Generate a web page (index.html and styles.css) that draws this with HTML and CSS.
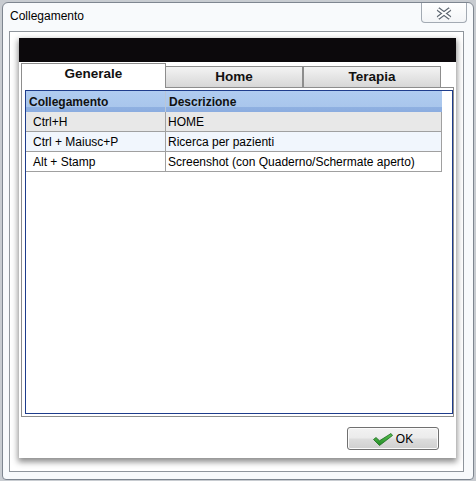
FILE: index.html
```html
<!DOCTYPE html>
<html lang="it">
<head>
    <meta charset="UTF-8">
    <title>Collegamento</title>
    <link rel="stylesheet" href="styles.css">
</head>
<body>
    <div class="window">
        <div class="titlebar">
            <span class="title">Collegamento</span>
            <button class="close-btn" title="Chiudi">
                <svg width="18" height="13" viewBox="0 0 18 13">
                    <path d="M3 2 L15 11 M15 2 L3 11" stroke="#5d6670" stroke-width="4.2" fill="none"/>
                    <path d="M3 2 L15 11 M15 2 L3 11" stroke="#ffffff" stroke-width="2" fill="none"/>
                </svg>
            </button>
        </div>

        <div class="client">
            <div class="panel">
                <div class="banner"></div>

                <div class="tabs">
                    <div class="tab active">Generale</div>
                    <div class="tab tab-home">Home</div>
                    <div class="tab tab-last">Terapia</div>
                </div>

                <div class="tab-page">
                    <div class="grid">
                        <table class="shortcuts">
                            <colgroup>
                                <col class="col-key">
                                <col class="col-desc">
                            </colgroup>
                            <thead>
                                <tr>
                                    <th>Collegamento</th>
                                    <th>Descrizione</th>
                                </tr>
                            </thead>
                            <tbody>
                                <tr class="row-selected">
                                    <td class="key">Ctrl+H</td>
                                    <td>HOME</td>
                                </tr>
                                <tr class="row-alt">
                                    <td class="key">Ctrl + Maiusc+P</td>
                                    <td>Ricerca per pazienti</td>
                                </tr>
                                <tr>
                                    <td class="key">Alt + Stamp</td>
                                    <td>Screenshot (con Quaderno/Schermate aperto)</td>
                                </tr>
                            </tbody>
                        </table>
                    </div>
                </div>

                <div class="footer">
                    <button class="ok-btn">
                        <svg width="20" height="13" viewBox="0 0 20 13">
                            <defs>
                                <linearGradient id="checkFill" x1="0" y1="0" x2="0" y2="1">
                                    <stop offset="0" stop-color="#5cc453"/>
                                    <stop offset="1" stop-color="#1f8a23"/>
                                </linearGradient>
                            </defs>
                            <polygon points="0.5,6.5 3,4.5 6.5,7.8 18,0.5 19.5,2.5 6.5,12.5" fill="url(#checkFill)" stroke="#1c6b1f" stroke-width="0.8" stroke-linejoin="round"/>
                        </svg>
                        <span>OK</span>
                    </button>
                </div>
            </div>
        </div>
    </div>
</body>
</html>
```

FILE: styles.css
```css
* {
    margin: 0;
    padding: 0;
    box-sizing: border-box;
    font-family: 'Liberation Sans', Arial, sans-serif;
}

body {
    background-color: #c8ccd1;
    width: 476px;
    height: 481px;
    overflow: hidden;
}

/* Window frame */
.window {
    margin: 2px 0 0 2px;
    width: 472px;
    height: 478px;
    border: 1px solid #7e8690;
    border-radius: 6px 6px 4px 4px;
    background-color: #f8fafc;
    padding: 0 9px 7px 6px;
    display: flex;
    flex-direction: column;
}

.titlebar {
    height: 28px;
    display: flex;
    align-items: flex-start;
}

.title {
    margin: 6px 0 0 1px;
    font-size: 12px;
    line-height: 15px;
    color: #000;
}

.close-btn {
    margin-left: auto;
    margin-right: -3px;
    width: 46px;
    height: 20px;
    border: 1px solid #a3aab3;
    border-top: none;
    border-radius: 0 0 4px 4px;
    background: linear-gradient(#ffffff, #f3f5f7);
    display: flex;
    align-items: center;
    justify-content: center;
    padding-top: 1px;
}

/* White client area */
.client {
    flex: 1;
    border: 1px solid #8f959c;
    background-color: #fff;
    padding: 6px 7px 13px 9px;
}

.panel {
    width: 437px;
    height: 420px;
    background-color: #fff;
    box-shadow: 0 3px 6px 1px rgba(0, 0, 0, 0.45);
    display: flex;
    flex-direction: column;
}

.banner {
    height: 24px;
    background-color: #0c090c;
}

/* Tabs */
.tabs {
    position: relative;
    z-index: 1;
    height: 25px;
    margin: 1px 2px 0;
    display: flex;
    align-items: flex-end;
}

.tab {
    height: 22px;
    border: 1px solid #8d8d8d;
    background: linear-gradient(#f3f3f3, #d7d7d7);
    font-size: 13.5px;
    font-weight: bold;
    line-height: 16px;
    padding-top: 2px;
    text-align: center;
    color: #111;
}

.tab.active {
    width: 145px;
    height: 25px;
    border-bottom: none;
    background: #fff;
    padding-top: 2px;
}

.tab-home {
    width: 137px;
    border-left: none;
}

.tab-last {
    width: 138px;
}

.tab-page {
    margin: -1px 2px 0;
    height: 330px;
    border: 1px solid #8d8d8d;
    padding: 2px 0 2px 3px;
}

.grid {
    height: 100%;
    border: 1px solid #1f3d8c;
}

/* Shortcut table */
.shortcuts {
    width: 416px;
    table-layout: fixed;
    border-collapse: separate;
    border-spacing: 0;
    font-size: 12px;
    color: #000;
}

.col-key {
    width: 140px;
}

.col-desc {
    width: 276px;
}

.shortcuts th {
    height: 21px;
    text-align: left;
    font-weight: bold;
    padding: 1px 0 0 3px;
    line-height: 19px;
    background: linear-gradient(#b0ccf0 0, #a9c6ec 76%, #8fb0e1 77%, #8cade0 100%);
    border-right: 1px solid #b9c6d8;
    color: #111;
}

.shortcuts th:last-child {
    border-right: none;
}

.shortcuts td {
    height: 20px;
    line-height: 18px;
    padding: 1px 0 0 2px;
    border-right: 1px solid #a0a0a0;
    border-bottom: 1px solid #a0a0a0;
    white-space: nowrap;
    overflow: hidden;
}

.shortcuts td.key {
    padding-left: 7px;
}

.row-selected td {
    background-color: #e8e8e8;
}

.row-alt td {
    background-color: #f1f6fd;
}

/* Bottom button bar */
.footer {
    display: flex;
    justify-content: flex-end;
    padding: 10px 17px 0 0;
}

.ok-btn {
    width: 92px;
    height: 23px;
    border: 1px solid #707070;
    border-radius: 3px;
    background: linear-gradient(#f2f2f2 0%, #ebebeb 48%, #dddddd 52%, #cfcfcf 100%);
    box-shadow: inset 0 0 0 1px #fbfbfb;
    display: flex;
    align-items: center;
    justify-content: center;
    gap: 3px;
    font-size: 12px;
    color: #000;
}

.ok-btn svg {
    margin-top: 1px;
}
```
